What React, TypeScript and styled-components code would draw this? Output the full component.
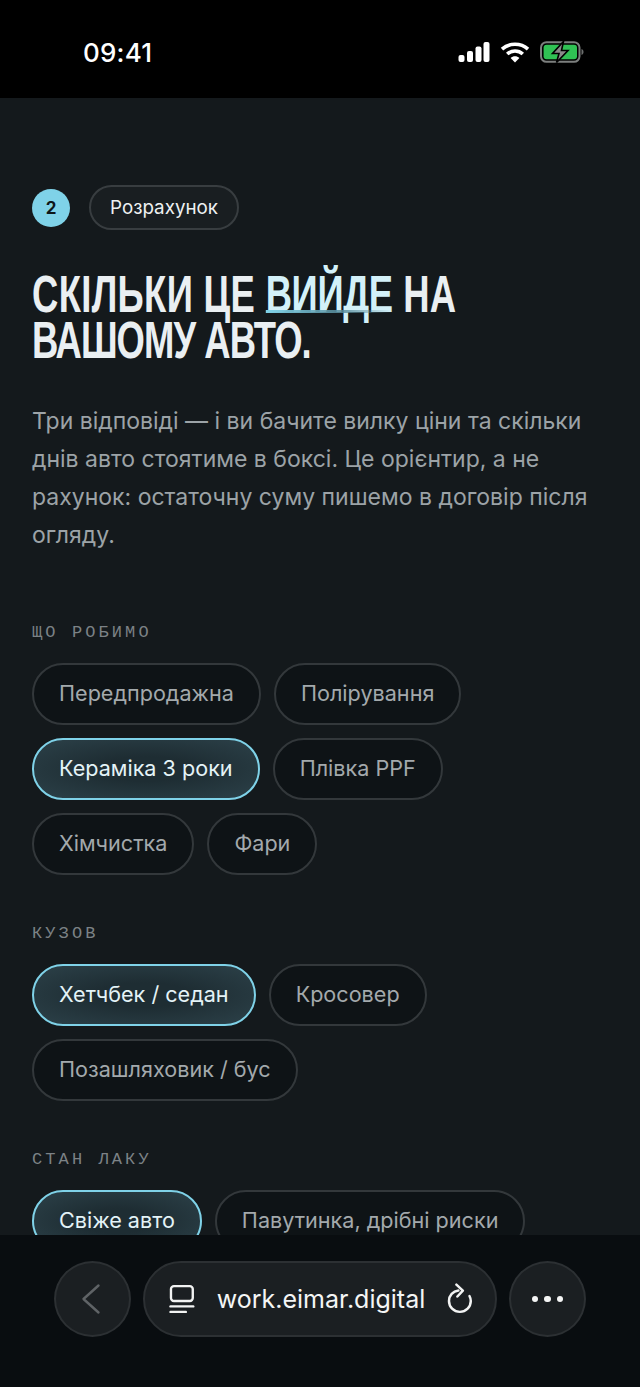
import * as React from 'react';
import styled, { createGlobalStyle } from 'styled-components';

const GlobalStyle = createGlobalStyle`
  html, body {
    margin: 0;
    padding: 0;
    background: #000;
  }
  * {
    box-sizing: border-box;
  }
`;

const SECTIONS = [
  {
    title: 'ЩО РОБИМО',
    options: [
      { label: 'Передпродажна' },
      { label: 'Полірування' },
      { label: 'Кераміка 3 роки', active: true },
      { label: 'Плівка PPF' },
      { label: 'Хімчистка' },
      { label: 'Фари' },
    ],
  },
  {
    title: 'КУЗОВ',
    options: [
      { label: 'Хетчбек / седан', active: true },
      { label: 'Кросовер' },
      { label: 'Позашляховик / бус' },
    ],
  },
  {
    title: 'СТАН ЛАКУ',
    options: [
      { label: 'Свіже авто', active: true },
      { label: 'Павутинка, дрібні риски' },
    ],
  },
];

const App: React.FC = () => (
  <Screen>
    <GlobalStyle />
    <StatusBar>
      <Clock>09:41</Clock>
      <StatusIcons>
        <svg width="32" height="20" viewBox="0 0 32 20" fill="#fff">
          <rect x="0.5" y="13" width="6" height="7" rx="2" />
          <rect x="9" y="9" width="6" height="11" rx="2" />
          <rect x="17.5" y="4.5" width="6" height="15.5" rx="2" />
          <rect x="25.5" y="0" width="6" height="20" rx="2" />
        </svg>
        <svg width="30" height="22" viewBox="0 0 30 22" fill="none" stroke="#fff" strokeWidth="3.6">
          <path d="M2 8.2C9.2 1.6 20.8 1.6 28 8.2" />
          <path d="M7.2 13C11.6 9 18.4 9 22.8 13" />
          <path d="M15 21.5L10.6 16.9C13 14.8 17 14.8 19.4 16.9Z" fill="#fff" stroke="none" />
        </svg>
        <svg width="44" height="22" viewBox="0 0 44 22">
          <rect x="1" y="1.2" width="38.5" height="19.6" rx="5.5" fill="none" stroke="#7c7f7e" strokeWidth="2" />
          <rect x="3.6" y="3.8" width="33.4" height="14.4" rx="3" fill="#30c254" />
          <path d="M41.5 8v6c1.3-.4 2-1.600 2-3s-.7-2.600-2-3z" fill="#6c6f6e" />
          <path d="M23.500 0.500L12.500 12.500H19L16.500 21.500L28 9.500H21.500Z" fill="#8a8a8a" stroke="#000" strokeWidth="1.6" />
        </svg>
      </StatusIcons>
    </StatusBar>

    <Content>
      <StepRow>
        <StepNumber>2</StepNumber>
        <StepPill>Розрахунок</StepPill>
      </StepRow>

      <Heading>
        <HeadingLine $spacing={0.5}>
          СКІЛЬКИ ЦЕ <Accent>ВИЙДЕ</Accent> НА
        </HeadingLine>
        <HeadingLine $spacing={-1.3}>ВАШОМУ АВТО.</HeadingLine>
      </Heading>

      <Lead>
        Три відповіді — і ви бачите вилку ціни та скільки днів авто стоятиме в боксі. Це орієнтир, а не
        рахунок: остаточну суму пишемо в договір після огляду.
      </Lead>

      {SECTIONS.map((section) => (
        <Section key={section.title}>
          <SectionLabel>{section.title}</SectionLabel>
          <Chips>
            {section.options.map((option) => (
              <Chip key={option.label} $active={option.active}>
                {option.label}
              </Chip>
            ))}
          </Chips>
        </Section>
      ))}
    </Content>

    <BrowserBar>
      <RoundButton>
        <svg width="24" height="32" viewBox="0 0 24 32" fill="none" stroke="#5f6366" strokeWidth="2.4" strokeLinecap="round" strokeLinejoin="round">
          <path d="M17.500 2.500L2.500 16L17.500 29.500" />
        </svg>
      </RoundButton>
      <AddressBar>
        <svg width="26" height="30" viewBox="0 0 26 30" fill="none" stroke="#f2f3f3" strokeWidth="2.4" strokeLinecap="round">
          <rect x="2" y="2" width="22" height="15" rx="3" />
          <path d="M1.500 22.500H24.500" />
          <path d="M1.500 28H17" />
        </svg>
        <Url>work.eimar.digital</Url>
        <ReloadIcon width="26" height="32" viewBox="0 0 26 32" fill="none" stroke="#f2f3f3" strokeWidth="2.500" strokeLinecap="round" strokeLinejoin="round">
          <path d="M11.500 7.500C6 8 2 12.500 2 18C2 24 6.800 29 13 29C19.200 29 24 24 24 18C24 16 23.500 14.500 22.700 13" />
          <path d="M9.500 1.500L16 7.500L10.500 13.500" />
        </ReloadIcon>
      </AddressBar>
      <RoundButton>
        <Dots>
          <Dot />
          <Dot />
          <Dot />
        </Dots>
      </RoundButton>
    </BrowserBar>
  </Screen>
);

export default App;

const Screen = styled.div`
  width: 640px;
  height: 1387px;
  display: flex;
  flex-direction: column;
  overflow: hidden;
  background: #14191c;
  font-family: Inter, 'Noto Sans', sans-serif;
`;

const StatusBar = styled.header`
  flex: 0 0 98px;
  background: #000;
  display: flex;
  align-items: center;
  justify-content: space-between;
  padding: 6px 56px 0 83px;
`;

const Clock = styled.div`
  color: #fff;
  font-size: 26px;
  font-weight: 500;
  letter-spacing: 0.2px;
`;

const StatusIcons = styled.div`
  display: flex;
  align-items: center;
  gap: 10px;
`;

const Content = styled.main`
  flex: 1 1 0;
  min-height: 0;
  overflow: hidden;
  padding: 87px 32px 0;
  background: #14191c;
`;

const StepRow = styled.div`
  display: flex;
  align-items: center;
  gap: 19px;
`;

const StepNumber = styled.div`
  width: 38px;
  height: 38px;
  border-radius: 50%;
  background: #7fd2e8;
  color: #0e1619;
  font-size: 17px;
  font-weight: 700;
  display: flex;
  align-items: center;
  justify-content: center;
`;

const StepPill = styled.div`
  height: 45px;
  padding: 0 19px;
  border: 2px solid #383d40;
  border-radius: 23px;
  background: #191e21;
  color: #eef1f2;
  font-size: 18.8px;
  font-weight: 400;
  display: flex;
  align-items: center;
`;

const Heading = styled.h1`
  margin: 41px 0 0;
  color: #eaeff2;
  font-family: 'Liberation Sans', sans-serif;
  font-size: 52px;
  font-weight: 700;
  line-height: 46px;
  white-space: nowrap;
  transform: scaleX(0.7);
  transform-origin: left center;
`;

const HeadingLine = styled.span<{ $spacing: number }>`
  display: block;
  letter-spacing: ${({ $spacing }) => $spacing}px;
`;

const Accent = styled.span`
  position: relative;
  color: #d3f1f9;
  letter-spacing: -0.5px;

  &::after {
    content: '';
    position: absolute;
    left: 0;
    right: 0;
    bottom: 10px;
    height: 3px;
    background: linear-gradient(90deg, #7fd2e8, rgba(88, 140, 155, 0.85) 60%, rgba(88, 140, 155, 0) 100%);
  }
`;

const Lead = styled.p`
  margin: 39px 0 69px;
  color: #9ca3a7;
  font-size: 23px;
  font-weight: 400;
  line-height: 38px;
`;

const Section = styled.section`
  & + & {
    margin-top: 49px;
  }
`;

const SectionLabel = styled.div`
  color: #7c8286;
  font-family: 'Liberation Mono', 'DejaVu Sans Mono', monospace;
  font-size: 17px;
  line-height: 20px;
  letter-spacing: 3.1px;
  margin-bottom: 20px;
`;

const Chips = styled.div`
  display: flex;
  flex-wrap: wrap;
  gap: 13px;
`;

const Chip = styled.button<{ $active?: boolean }>`
  height: 62px;
  padding: 0 25px 2px;
  border-radius: 31px;
  border: 2px solid ${({ $active }) => ($active ? '#7fd2e8' : '#33383b')};
  background: ${({ $active }) =>
    $active ? 'radial-gradient(ellipse at center, #1e2d33 30%, #2c4149 100%)' : '#0e1316'};
  color: ${({ $active }) => ($active ? '#e4f3f7' : '#a3a9ac')};
  font-family: Inter, 'Noto Sans', sans-serif;
  font-size: 21.6px;
  font-weight: 400;
  white-space: nowrap;
`;

const BrowserBar = styled.footer`
  flex: 0 0 152px;
  background: #090d10;
  display: flex;
  align-items: flex-start;
  justify-content: center;
  gap: 12px;
  padding-top: 26px;
`;

const RoundButton = styled.div`
  width: 77px;
  height: 76px;
  border-radius: 50%;
  border: 2px solid #2c3033;
  background: #1b1f22;
  display: flex;
  align-items: center;
  justify-content: center;
`;

const AddressBar = styled.div`
  width: 354px;
  height: 76px;
  border-radius: 38px;
  border: 2px solid #2c3033;
  background: #1b1f22;
  display: flex;
  align-items: center;
  gap: 22px;
  padding: 0 22px 0 24px;
`;

const Url = styled.div`
  color: #f4f5f5;
  font-size: 25px;
  font-weight: 400;
`;

const ReloadIcon = styled.svg`
  margin-left: auto;
`;

const Dots = styled.div`
  display: flex;
  gap: 6px;
`;

const Dot = styled.span`
  width: 6.5px;
  height: 6.5px;
  border-radius: 50%;
  background: #f4f5f5;
`;
